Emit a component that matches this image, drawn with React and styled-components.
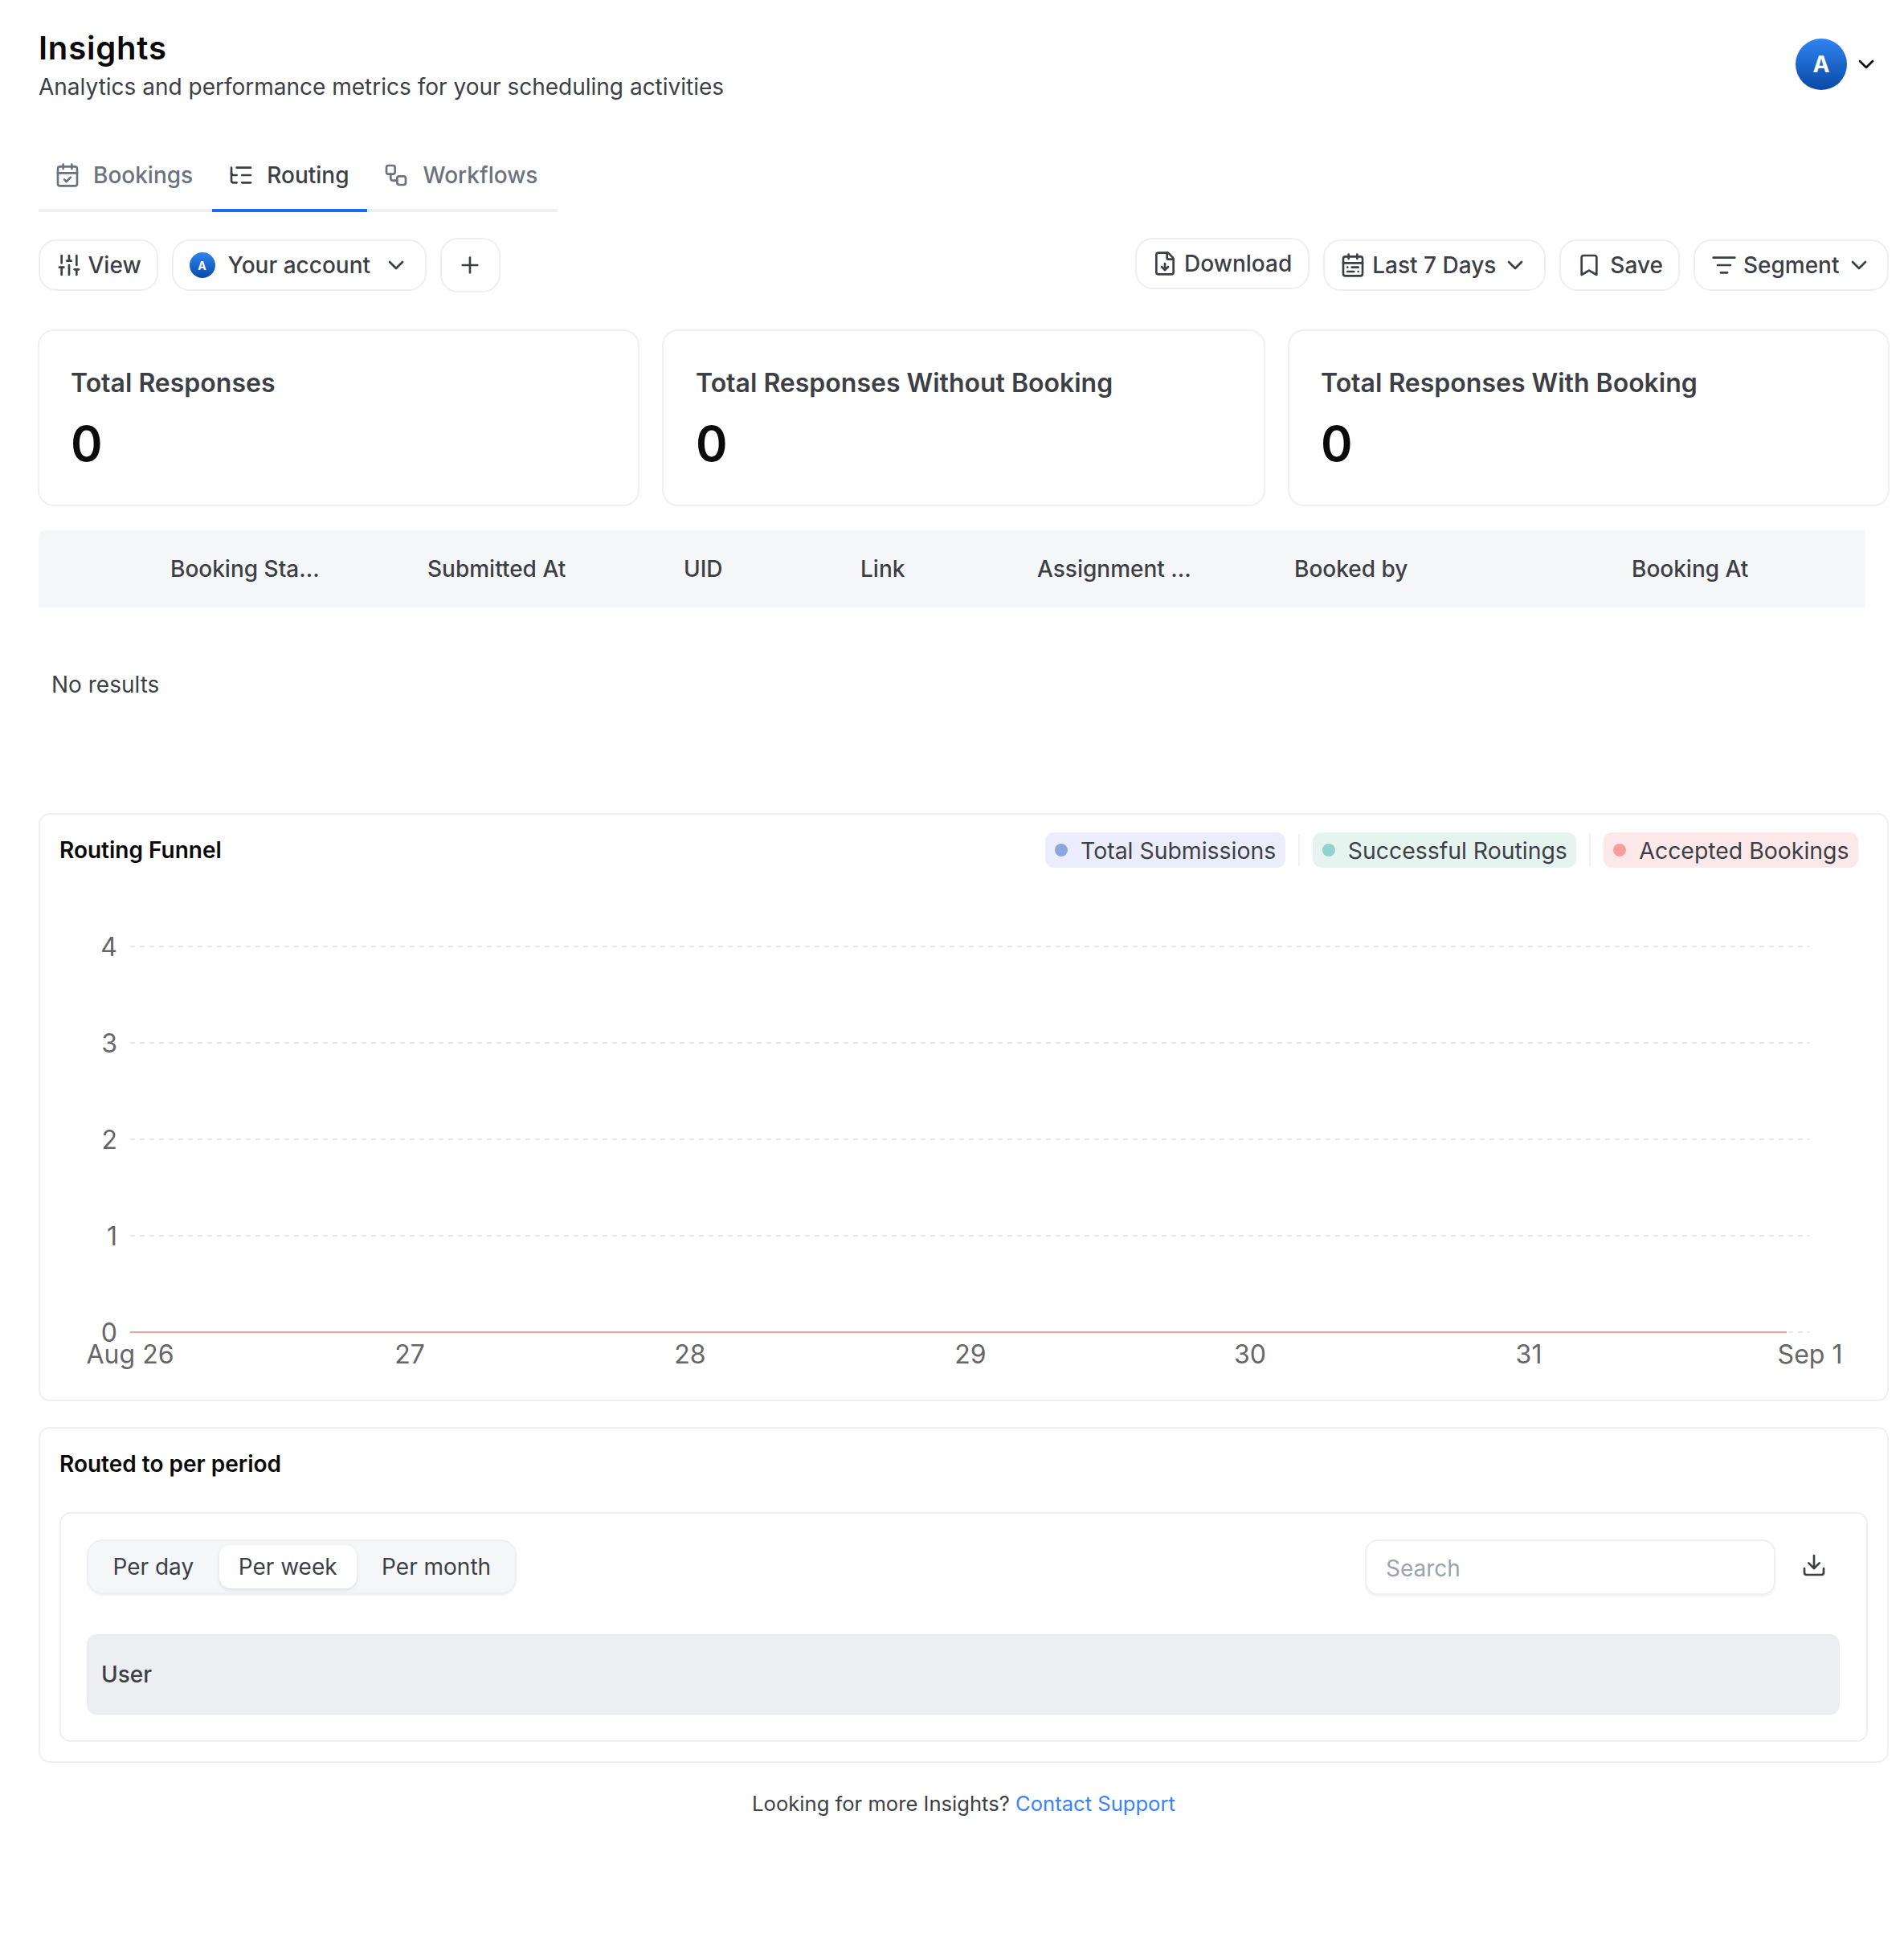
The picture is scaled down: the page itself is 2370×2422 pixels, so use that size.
import styled, { createGlobalStyle } from "styled-components";
import {
  Bookmark,
  CalendarCheck,
  CalendarRange,
  ChevronDown,
  Download,
  FileDown,
  ListFilter,
  ListTree,
  Plus,
  SlidersVertical,
  Workflow,
} from "lucide-react";

const GlobalStyle = createGlobalStyle`
  html, body {
    margin: 0;
    padding: 0;
    background: #ffffff;
    font-family: Inter, "Noto Sans", sans-serif;
    color: #3d3f46;
  }
  * {
    box-sizing: border-box;
  }
`;

const Page = styled.div`
  width: 2370px;
  min-height: 2422px;
  padding: 36px 19px 0 48px;
`;

const Header = styled.header`
  display: flex;
  justify-content: space-between;
  align-items: flex-start;
  height: 136px;
`;

const Title = styled.h1`
  margin: 0;
  font-size: 40px;
  line-height: 48px;
  font-weight: 600;
  letter-spacing: 0.8px;
  color: #0a0a0a;
`;

const Subtitle = styled.p`
  margin: 4px 0 0;
  font-size: 28px;
  line-height: 40px;
  color: #3d3f46;
`;

const UserMenu = styled.div`
  display: flex;
  align-items: center;
  gap: 8px;
  padding: 12px 12px 0 0;
  color: #0a0a0a;
`;

const Avatar = styled.div`
  display: flex;
  align-items: center;
  justify-content: center;
  flex: none;
  width: ${(p) => p.$size}px;
  height: ${(p) => p.$size}px;
  border-radius: 50%;
  background: linear-gradient(180deg, #2f84f0 0%, #0a49a8 100%);
  color: #ffffff;
  font-size: ${(p) => p.$size * 0.44}px;
  font-weight: 700;
`;

const Tabs = styled.nav`
  display: inline-flex;
  border-bottom: 4px solid #eef0f3;
  height: 92px;
`;

const Tab = styled.div`
  display: flex;
  align-items: center;
  gap: 16px;
  height: 92px;
  padding: 3px ${(p) => (p.$active ? 22 : 24)}px 0 20px;
  font-size: 28px;
  font-weight: 500;
  color: ${(p) => (p.$active ? "#3d3f46" : "#6b7280")};
  border-bottom: 4px solid ${(p) => (p.$active ? "#1a6cf0" : "transparent")};

  &:last-child {
    gap: 18px;
    padding-right: 25px;
  }
`;

const Toolbar = styled.div`
  display: flex;
  justify-content: space-between;
  align-items: flex-start;
  height: 68px;
  margin-top: 32px;
`;

const ToolGroup = styled.div`
  display: flex;
  align-items: center;
  gap: 17px;
  height: 68px;
`;

const PillButton = styled.button`
  display: flex;
  align-items: center;
  gap: ${(p) => p.$gap || 8}px;
  height: ${(p) => p.$height || 64}px;
  padding: 0 19.5px;
  align-self: ${(p) => (p.$raised ? "flex-start" : "center")};
  background: #ffffff;
  border: 2px solid #eceef2;
  border-radius: 22px;
  font-family: inherit;
  font-size: 28px;
  font-weight: 500;
  color: #3d3f46;
`;

const StatGrid = styled.section`
  display: grid;
  grid-template-columns: 1fr 751px 1fr;
  gap: 28px;
  width: 2305px;
  margin: 46px 0 0 -1px;
`;

const StatCard = styled.div`
  height: 220px;
  padding: 41px 39px 0;
  border: 2px solid #eef0f3;
  border-radius: 20px;
  background: #ffffff;

  &:nth-child(2) {
    padding-left: 40px;
  }
`;

const StatTitle = styled.div`
  font-size: 32px;
  line-height: 48px;
  font-weight: 600;
  color: #3d3f46;
`;

const StatValue = styled.div`
  margin-top: 19px;
  font-size: 60px;
  line-height: 64px;
  font-weight: 600;
  color: #0a0a0a;
`;

const TableHead = styled.div`
  display: grid;
  grid-template-columns: 164px 320px 319px 220px 220px 320px 420px 1fr;
  align-items: center;
  width: 2273px;
  height: 96px;
  margin-top: 30px;
  background: #f5f6f8;
  border-top-left-radius: 8px;
`;

const HeadCell = styled.div`
  font-size: 28px;
  font-weight: 500;
  color: #3d3f46;
`;

const EmptyRow = styled.div`
  margin-top: 76px;
  padding-left: 16px;
  font-size: 28px;
  line-height: 40px;
  color: #3d3f46;
`;

const Panel = styled.section`
  width: 2303px;
  border: 2px solid #eef0f3;
  border-radius: 14px;
  background: #ffffff;
`;

const FunnelPanel = styled(Panel)`
  height: 732px;
  margin-top: 140px;
`;

const PanelHead = styled.div`
  display: flex;
  justify-content: space-between;
  align-items: center;
  height: 44px;
  margin-top: 22px;
  padding: 0 36px 0 24px;
`;

const PanelTitle = styled.h2`
  margin: 0;
  font-size: 28px;
  line-height: 40px;
  font-weight: 600;
  color: #0a0a0a;
`;

const Legend = styled.div`
  display: flex;
  align-items: center;
  height: 44px;
`;

const LegendChip = styled.div`
  display: flex;
  align-items: center;
  gap: 16px;
  height: 44px;
  padding: 0 11.5px 0 12px;
  border-radius: 11px;
  background: ${(p) => p.$bg};
  font-size: 28.4px;
  color: #3d3f46;
`;

const LegendDot = styled.span`
  width: 16px;
  height: 16px;
  border-radius: 50%;
  background: ${(p) => p.$color};
`;

const LegendRule = styled.span`
  width: 2px;
  height: 40px;
  margin: 0 16px;
  background: #f1f2f4;
`;

const ChartSvg = styled.svg`
  display: block;
  margin-top: 31px;
  font-family: Inter, sans-serif;
  font-size: 32px;
`;

const PeriodPanel = styled(Panel)`
  height: 418px;
  margin-top: 32px;
  padding: 24px 24px 0;
`;

const InnerPanel = styled.div`
  height: 286px;
  margin-top: 40px;
  padding: 32px 33px 0 32px;
  border: 2px solid #eef0f3;
  border-radius: 14px;
`;

const PeriodBar = styled.div`
  display: flex;
  justify-content: space-between;
  align-items: flex-start;
  height: 69px;
`;

const Segments = styled.div`
  display: flex;
  gap: 7.5px;
  height: 68px;
  padding: 5px 5.5px 5px 6.5px;
  background: #f5f6f8;
  border: 2px solid #eef0f3;
  border-radius: 20px;
  box-shadow: 0 2px 3px rgba(17, 24, 39, 0.06);
`;

const Segment = styled.div`
  display: flex;
  align-items: center;
  height: 54px;
  padding: 0 24px;
  border-radius: 14px;
  font-size: 28px;
  color: #3d3f46;
  background: ${(p) => (p.$active ? "#ffffff" : "transparent")};
  box-shadow: ${(p) => (p.$active ? "0 2px 4px rgba(17, 24, 39, 0.1)" : "none")};
`;

const SearchGroup = styled.div`
  display: flex;
  align-items: flex-start;
  gap: 16px;
`;

const SearchInput = styled.input`
  width: 511px;
  height: 69px;
  padding: 3px 24px 0;
  border: 2px solid #eef0f3;
  border-radius: 16px;
  background: #ffffff;
  box-shadow: 0 2px 3px rgba(17, 24, 39, 0.06);
  font-family: inherit;
  font-size: 28px;
  color: #3d3f46;
  outline: none;

  &::placeholder {
    color: #9ca3af;
    opacity: 1;
  }
`;

const IconButton = styled.div`
  display: flex;
  justify-content: center;
  align-items: center;
  width: 64px;
  height: 64px;
  color: #3d3f46;
`;

const UserHead = styled.div`
  display: flex;
  align-items: center;
  height: 100px;
  margin-top: 49px;
  padding-left: 18px;
  background: #edeef1;
  border-radius: 12px;
  font-size: 28px;
  font-weight: 500;
  color: #3d3f46;
`;

const Footer = styled.footer`
  width: 2303px;
  margin-top: 31px;
  text-align: center;
  font-size: 25.6px;
  line-height: 40px;
  color: #3d3f46;
`;

const SupportLink = styled.a`
  color: #3b82f6;
  text-decoration: none;
`;

const columns = ["", "Booking Sta...", "Submitted At", "UID", "Link", "Assignment ...", "Booked by", "Booking At"];
const stats = ["Total Responses", "Total Responses Without Booking", "Total Responses With Booking"];
const yTicks = [
  { label: "4", y: 67 },
  { label: "3", y: 187 },
  { label: "2", y: 307 },
  { label: "1", y: 427 },
  { label: "0", y: 547 },
];
const xTicks = [
  { label: "Aug 26", x: 112 },
  { label: "27", x: 460 },
  { label: "28", x: 809 },
  { label: "29", x: 1158 },
  { label: "30", x: 1506 },
  { label: "31", x: 1853 },
  { label: "Sep 1", x: 2203 },
];

function FunnelChart() {
  return (
    <ChartSvg width="2299" height="635" viewBox="0 0 2299 635">
      {yTicks.map((t) => (
        <g key={t.label}>
          <line x1="112" x2="2202" y1={t.y} y2={t.y} stroke="#e5e6e9" strokeWidth="2" strokeDasharray="6 6" />
          <text x="96" y={t.y + 12} textAnchor="end" fill="#666666">
            {t.label}
          </text>
        </g>
      ))}
      <line x1="112" x2="2174" y1="547" y2="547" stroke="#f0a0a0" strokeWidth="2" />
      {xTicks.map((t) => (
        <text key={t.label} x={t.x} y="586" textAnchor="middle" fill="#666666">
          {t.label}
        </text>
      ))}
    </ChartSvg>
  );
}

export default function App() {
  return (
    <Page>
      <GlobalStyle />
      <Header>
        <div>
          <Title>Insights</Title>
          <Subtitle>Analytics and performance metrics for your scheduling activities</Subtitle>
        </div>
        <UserMenu>
          <Avatar $size={64}>A</Avatar>
          <ChevronDown size={32} strokeWidth={2} />
        </UserMenu>
      </Header>

      <Tabs>
        <Tab>
          <CalendarCheck size={32} strokeWidth={2} />
          Bookings
        </Tab>
        <Tab $active>
          <ListTree size={32} strokeWidth={2} />
          Routing
        </Tab>
        <Tab>
          <Workflow size={32} strokeWidth={2} />
          Workflows
        </Tab>
      </Tabs>

      <Toolbar>
        <ToolGroup>
          <PillButton>
            <SlidersVertical size={32} strokeWidth={2} />
            View
          </PillButton>
          <PillButton $gap={16}>
            <Avatar $size={32}>A</Avatar>
            Your account
            <ChevronDown size={32} strokeWidth={2} />
          </PillButton>
          <PillButton $height={68}>
            <Plus size={32} strokeWidth={2} />
          </PillButton>
        </ToolGroup>
        <ToolGroup>
          <PillButton $raised>
            <FileDown size={32} strokeWidth={2} />
            Download
          </PillButton>
          <PillButton>
            <CalendarRange size={32} strokeWidth={2} />
            Last 7 Days
            <ChevronDown size={32} strokeWidth={2} />
          </PillButton>
          <PillButton $gap={10}>
            <Bookmark size={32} strokeWidth={2} />
            Save
          </PillButton>
          <PillButton>
            <ListFilter size={32} strokeWidth={2} />
            Segment
            <ChevronDown size={32} strokeWidth={2} />
          </PillButton>
        </ToolGroup>
      </Toolbar>

      <StatGrid>
        {stats.map((s) => (
          <StatCard key={s}>
            <StatTitle>{s}</StatTitle>
            <StatValue>0</StatValue>
          </StatCard>
        ))}
      </StatGrid>

      <TableHead>
        {columns.map((c) => (
          <HeadCell key={c}>{c}</HeadCell>
        ))}
      </TableHead>
      <EmptyRow>No results</EmptyRow>

      <FunnelPanel>
        <PanelHead>
          <PanelTitle>Routing Funnel</PanelTitle>
          <Legend>
            <LegendChip $bg="#ebedfd">
              <LegendDot $color="#8da6de" />
              Total Submissions
            </LegendChip>
            <LegendRule />
            <LegendChip $bg="#e6f4ef">
              <LegendDot $color="#8fd2ce" />
              Successful Routings
            </LegendChip>
            <LegendRule />
            <LegendChip $bg="#fce8e8">
              <LegendDot $color="#f59e9e" />
              Accepted Bookings
            </LegendChip>
          </Legend>
        </PanelHead>
        <FunnelChart />
      </FunnelPanel>

      <PeriodPanel>
        <PanelTitle>Routed to per period</PanelTitle>
        <InnerPanel>
          <PeriodBar>
            <Segments>
              <Segment>Per day</Segment>
              <Segment $active>Per week</Segment>
              <Segment>Per month</Segment>
            </Segments>
            <SearchGroup>
              <SearchInput placeholder="Search" />
              <IconButton>
                <Download size={32} strokeWidth={2} />
              </IconButton>
            </SearchGroup>
          </PeriodBar>
          <UserHead>User</UserHead>
        </InnerPanel>
      </PeriodPanel>

      <Footer>
        Looking for more Insights? <SupportLink>Contact Support</SupportLink>
      </Footer>
    </Page>
  );
}
